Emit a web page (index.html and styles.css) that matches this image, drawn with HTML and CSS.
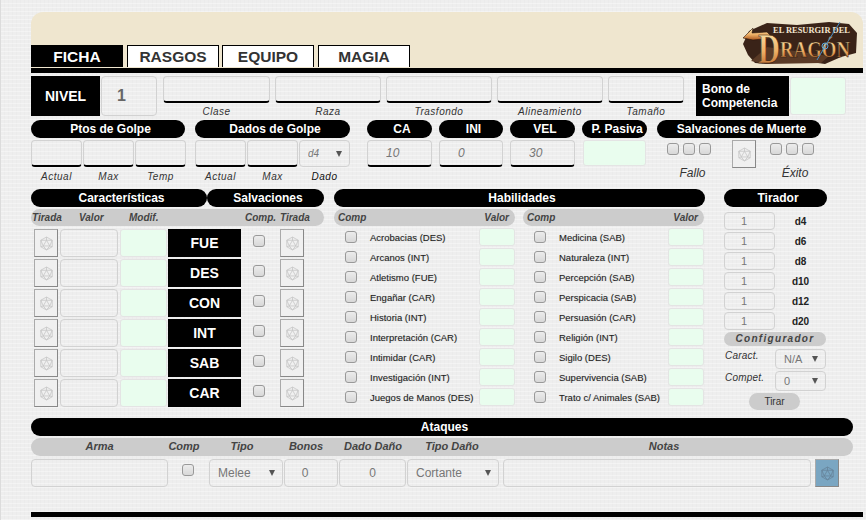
FILE: index.html
```html
<!DOCTYPE html>
<html lang="es">
<head>
    <meta charset="UTF-8">
    <title>Ficha de personaje</title>
    <link rel="stylesheet" href="styles.css">
</head>
<body>
    <svg class="sprite" width="0" height="0">
        <symbol id="d20" viewBox="0 0 16 18">
            <g fill="none" stroke-width="1">
                <path d="M8 1 L15 5 V13 L8 17 L1 13 V5 Z"/>
                <path d="M8 5 L12 12 H4 Z M8 1 V5 M1 5 L8 5 L15 5 M1 13 L4 12 M15 13 L12 12 M8 17 L4 12 M8 17 L12 12 M1 5 L4 12 M15 5 L12 12"/>
            </g>
        </symbol>
    </svg>
    <div class="sheet">
        <div class="banner">
            <div class="tabs">
                <div class="tab tab-active">FICHA</div>
                <div class="tab">RASGOS</div>
                <div class="tab">EQUIPO</div>
                <div class="tab">MAGIA</div>
            </div>
            <svg class="logo" width="123" height="56" viewBox="0 0 123 56">
                <defs>
                    <linearGradient id="gold" x1="0" y1="0" x2="0" y2="1">
                        <stop offset="0" stop-color="#fdeeb8"/>
                        <stop offset="0.55" stop-color="#eeb066"/>
                        <stop offset="1" stop-color="#a9561f"/>
                    </linearGradient>
                </defs>
                <path d="M6 25 L12 12 L30 4 L60 6 L92 3 L112 5 L120 14 L119 34 L104 38 L88 45 L60 41 L30 45 L18 44 L11 36 Z" fill="#3a2318"/>
                <path d="M14 42 L30 28 L92 37 L84 44 L30 45 Z" fill="#5a3a26"/>
                <path d="M6 19 L16 9 L15 14 L30 13 L36 19 L16 21 Z" fill="url(#gold)" stroke="#2a160c" stroke-width="0.6"/>
                <text class="logo-top" x="36" y="14" textLength="77" lengthAdjust="spacingAndGlyphs">EL RESURGIR DEL</text>
                <text class="logo-main" x="21" y="44" font-size="42" textLength="22" lengthAdjust="spacingAndGlyphs">D</text>
                <text class="logo-main" x="43" y="38" font-size="23" textLength="70" lengthAdjust="spacingAndGlyphs">RAGÓN</text>
                <path d="M103 3 L90 24 L80 41" fill="none" stroke="#4a90c8" stroke-width="1"/>
                <circle cx="88" cy="27" r="3" fill="none" stroke="#5aa5dc" stroke-width="1"/>
            </svg>
        </div>
        <div class="bar"></div>

        <div class="row-info">
            <div class="level-label">NIVEL</div>
            <input class="level-value" value="1">
            <div class="info-field info-clase"><input class="field"><span class="caption">Clase</span></div>
            <div class="info-field info-raza"><input class="field"><span class="caption">Raza</span></div>
            <div class="info-field info-raza"><input class="field"><span class="caption">Trasfondo</span></div>
            <div class="info-field info-raza"><input class="field"><span class="caption">Alineamiento</span></div>
            <div class="info-field info-tamano"><input class="field"><span class="caption">Tamaño</span></div>
            <div class="bonus-label">Bono de Competencia</div>
            <input class="calc bonus-value">
        </div>

        <div class="row-stats">
            <div class="group group-hp">
                <div class="pill">Ptos de Golpe</div>
                <div class="trio">
                    <input class="field"><input class="field"><input class="field">
                </div>
                <div class="trio-captions"><span class="caption">Actual</span><span class="caption">Max</span><span class="caption">Temp</span></div>
            </div>
            <div class="group group-dice">
                <div class="pill">Dados de Golpe</div>
                <div class="trio">
                    <input class="field"><input class="field">
                    <div class="select select-italic"><select><option>d4</option></select></div>
                </div>
                <div class="trio-captions"><span class="caption">Actual</span><span class="caption">Max</span><span class="caption caption-dark">Dado</span></div>
            </div>
            <div class="group group-ca">
                <div class="pill">CA</div>
                <input class="field field-stat" value="10">
            </div>
            <div class="group group-small">
                <div class="pill">INI</div>
                <input class="field field-stat" value="0">
            </div>
            <div class="group group-ca">
                <div class="pill">VEL</div>
                <input class="field field-stat" value="30">
            </div>
            <div class="group group-ca">
                <div class="pill">P. Pasiva</div>
                <input class="calc calc-passive">
            </div>
            <div class="group group-death">
                <div class="pill">Salvaciones de Muerte</div>
                <div class="death">
                    <div class="death-side death-fail">
                        <div class="death-checks"><input type="checkbox" class="check"><input type="checkbox" class="check"><input type="checkbox" class="check"></div>
                        <span class="death-label">Fallo</span>
                    </div>
                    <button class="die"><svg><use href="#d20"/></svg></button>
                    <div class="death-side death-ok">
                        <div class="death-checks"><input type="checkbox" class="check"><input type="checkbox" class="check"><input type="checkbox" class="check"></div>
                        <span class="death-label">Éxito</span>
                    </div>
                </div>
            </div>
        </div>

        <div class="row-main">
            <section class="abilities">
                <div class="pills-two">
                    <div class="pill pill-char">Características</div>
                    <div class="pill pill-save">Salvaciones</div>
                </div>
                <div class="subhead subhead-abilities">
                    <span>Tirada</span><span>Valor</span><span>Modif.</span><span>Comp.</span><span>Tirada</span>
                </div>
                <div class="ability">
                    <button class="die"><svg><use href="#d20"/></svg></button>
                    <input class="plain ability-value"><input class="calc ability-mod">
                    <div class="ability-name">FUE</div>
                    <input type="checkbox" class="check ability-check">
                    <button class="die"><svg><use href="#d20"/></svg></button>
                </div>
                <div class="ability">
                    <button class="die"><svg><use href="#d20"/></svg></button>
                    <input class="plain ability-value"><input class="calc ability-mod">
                    <div class="ability-name">DES</div>
                    <input type="checkbox" class="check ability-check">
                    <button class="die"><svg><use href="#d20"/></svg></button>
                </div>
                <div class="ability">
                    <button class="die"><svg><use href="#d20"/></svg></button>
                    <input class="plain ability-value"><input class="calc ability-mod">
                    <div class="ability-name">CON</div>
                    <input type="checkbox" class="check ability-check">
                    <button class="die"><svg><use href="#d20"/></svg></button>
                </div>
                <div class="ability">
                    <button class="die"><svg><use href="#d20"/></svg></button>
                    <input class="plain ability-value"><input class="calc ability-mod">
                    <div class="ability-name">INT</div>
                    <input type="checkbox" class="check ability-check">
                    <button class="die"><svg><use href="#d20"/></svg></button>
                </div>
                <div class="ability">
                    <button class="die"><svg><use href="#d20"/></svg></button>
                    <input class="plain ability-value"><input class="calc ability-mod">
                    <div class="ability-name">SAB</div>
                    <input type="checkbox" class="check ability-check">
                    <button class="die"><svg><use href="#d20"/></svg></button>
                </div>
                <div class="ability">
                    <button class="die"><svg><use href="#d20"/></svg></button>
                    <input class="plain ability-value"><input class="calc ability-mod">
                    <div class="ability-name">CAR</div>
                    <input type="checkbox" class="check ability-check">
                    <button class="die"><svg><use href="#d20"/></svg></button>
                </div>
            </section>

            <section class="skills">
                <div class="pill">Habilidades</div>
                <div class="skills-cols">
                    <div class="skills-col">
                        <div class="subhead subhead-skills"><span>Comp</span><span>Valor</span></div>
                        <div class="skill"><input type="checkbox" class="check"><span>Acrobacias (DES)</span><input class="calc"></div>
                        <div class="skill"><input type="checkbox" class="check"><span>Arcanos (INT)</span><input class="calc"></div>
                        <div class="skill"><input type="checkbox" class="check"><span>Atletismo (FUE)</span><input class="calc"></div>
                        <div class="skill"><input type="checkbox" class="check"><span>Engañar (CAR)</span><input class="calc"></div>
                        <div class="skill"><input type="checkbox" class="check"><span>Historia (INT)</span><input class="calc"></div>
                        <div class="skill"><input type="checkbox" class="check"><span>Interpretación (CAR)</span><input class="calc"></div>
                        <div class="skill"><input type="checkbox" class="check"><span>Intimidar (CAR)</span><input class="calc"></div>
                        <div class="skill"><input type="checkbox" class="check"><span>Investigación (INT)</span><input class="calc"></div>
                        <div class="skill"><input type="checkbox" class="check"><span>Juegos de Manos (DES)</span><input class="calc"></div>
                    </div>
                    <div class="skills-col">
                        <div class="subhead subhead-skills"><span>Comp</span><span>Valor</span></div>
                        <div class="skill"><input type="checkbox" class="check"><span>Medicina (SAB)</span><input class="calc"></div>
                        <div class="skill"><input type="checkbox" class="check"><span>Naturaleza (INT)</span><input class="calc"></div>
                        <div class="skill"><input type="checkbox" class="check"><span>Percepción (SAB)</span><input class="calc"></div>
                        <div class="skill"><input type="checkbox" class="check"><span>Perspicacia (SAB)</span><input class="calc"></div>
                        <div class="skill"><input type="checkbox" class="check"><span>Persuasión (CAR)</span><input class="calc"></div>
                        <div class="skill"><input type="checkbox" class="check"><span>Religión (INT)</span><input class="calc"></div>
                        <div class="skill"><input type="checkbox" class="check"><span>Sigilo (DES)</span><input class="calc"></div>
                        <div class="skill"><input type="checkbox" class="check"><span>Supervivencia (SAB)</span><input class="calc"></div>
                        <div class="skill"><input type="checkbox" class="check"><span>Trato c/ Animales (SAB)</span><input class="calc"></div>
                    </div>
                </div>
            </section>

            <section class="roller">
                <div class="pill">Tirador</div>
                <div class="dice-list">
                    <div class="dice-row"><input class="plain" value="1"><span>d4</span></div>
                    <div class="dice-row"><input class="plain" value="1"><span>d6</span></div>
                    <div class="dice-row"><input class="plain" value="1"><span>d8</span></div>
                    <div class="dice-row"><input class="plain" value="1"><span>d10</span></div>
                    <div class="dice-row"><input class="plain" value="1"><span>d12</span></div>
                    <div class="dice-row"><input class="plain" value="1"><span>d20</span></div>
                </div>
                <div class="config-title">Configurador</div>
                <div class="config-rows">
                    <div class="config-row"><span>Caract.</span><div class="select"><select><option>N/A</option></select></div></div>
                    <div class="config-row"><span>Compet.</span><div class="select"><select><option>0</option></select></div></div>
                </div>
                <button class="roll">Tirar</button>
            </section>
        </div>

        <section class="attacks">
            <div class="pill">Ataques</div>
            <div class="subhead subhead-attacks">
                <span>Arma</span><span>Comp</span><span>Tipo</span><span>Bonos</span><span>Dado Daño</span><span>Tipo Daño</span><span>Notas</span>
            </div>
            <div class="attack-row">
                <input class="plain">
                <input type="checkbox" class="check attack-check">
                <div class="select"><select><option>Melee</option></select></div>
                <input class="plain attack-num attack-bonus" value="0">
                <input class="plain attack-num" value="0">
                <div class="select attack-damage"><select><option>Cortante</option></select></div>
                <input class="plain attack-notes">
                <button class="die die-blue"><svg><use href="#d20"/></svg></button>
            </div>
        </section>
        <div class="bar bar-bottom"></div>
    </div>
</body>
</html>
```

FILE: styles.css
```css
:root {
    --tan: #efe6cf;
    --line: #d2d2d2;
    --green: #e9fdee;
    --grey-head: #cccccc;
    --text-soft: #777;
}
* {
    box-sizing: border-box;
}
body {
    margin: 0;
    height: 520px;
    overflow: hidden;
    padding: 12px 0 0 30px;
    border-left: 1px solid #dcdcdc;
    font-family: "Liberation Sans", Arial, sans-serif;
    color: #222;
    background-color: #eeeeee;
    background-image:
        repeating-linear-gradient(0deg, rgba(255,255,255,0.35) 0 1px, transparent 1px 4px),
        repeating-linear-gradient(90deg, rgba(0,0,0,0.012) 0 1px, transparent 1px 4px);
}
.sprite {
    position: absolute;
}
.sheet {
    width: 832px;
}

/* banner + tabs */
.banner {
    display: flex;
    justify-content: space-between;
    align-items: flex-end;
    height: 56px;
    padding: 0 3px 1px 0;
    background: var(--tan);
    border-radius: 12px 12px 0 0;
}
.tabs {
    display: flex;
    gap: 3px;
}
.tab {
    width: 92px;
    height: 22px;
    line-height: 21px;
    text-align: center;
    font-size: 15.5px;
    font-weight: bold;
    color: #333;
    background: #fff;
    border: 1px solid #000;
    border-bottom: 0;
}
.tab:last-child {
    margin-left: 1px;
}
.tab-active {
    color: #fff;
    background: #000;
    margin-right: 1px;
}
.logo {
    flex: none;
    margin-bottom: -8px;
}
.logo-top {
    font-family: "Liberation Serif", serif;
    font-weight: bold;
    font-size: 8px;
    fill: #f3e6d0;
}
.logo-main {
    font-family: "Liberation Serif", serif;
    font-weight: bold;
    fill: url(#gold);
    stroke: #2a160c;
    stroke-width: 0.5px;
}
.bar {
    height: 5px;
    background: #000;
}
.bar-bottom {
    margin-top: 25px;
}

/* shared bits */
input, select, button {
    font-family: inherit;
    margin: 0;
}
input {
    outline: 0;
}
.field {
    display: block;
    width: 100%;
    height: 27px;
    background: transparent;
    border: 1px solid var(--line);
    border-bottom: 2px solid #000;
    border-radius: 4px;
    font-size: 12px;
    color: var(--text-soft);
}
.field-stat {
    font-style: italic;
    text-align: left;
    padding-left: 18px;
}
.plain {
    background: transparent;
    border: 1px solid var(--line);
    border-radius: 4px;
    color: var(--text-soft);
    font-size: 11px;
}
.calc {
    background: var(--green);
    border: 1px solid #e4e4e4;
    border-radius: 3px;
}
.caption {
    display: block;
    text-align: center;
    font-size: 10px;
    font-style: italic;
    letter-spacing: 0.5px;
    color: #333;
    line-height: 12px;
}
.caption-dark {
    color: #111;
}
.pill {
    height: 18px;
    line-height: 18px;
    padding-left: 5px;
    border-radius: 9px;
    background: #000;
    color: #fff;
    text-align: center;
    font-size: 12px;
    font-weight: bold;
}
.subhead {
    height: 17px;
    margin-top: 2px;
    line-height: 17px;
    border-radius: 9px;
    background: var(--grey-head);
    font-size: 10px;
    font-weight: bold;
    font-style: italic;
    color: #444;
}
.check {
    appearance: none;
    display: block;
    width: 12px;
    height: 12px;
    margin: 0;
    background: linear-gradient(#ececec, #d8d8d8);
    border: 1px solid #999;
    border-radius: 3px;
}
.die {
    flex: none;
    display: flex;
    align-items: center;
    justify-content: center;
    width: 24px;
    height: 28px;
    padding: 0;
    background: #f0f0f0;
    border: 1px solid #aaa;
    border-right-color: #888;
    border-bottom-color: #888;
}
.die svg {
    width: 13px;
    height: 15px;
    stroke: #c6c6c6;
}
.die-blue {
    margin-left: 4px;
    background: #7aa6c2;
}
.die-blue svg {
    stroke: #66849a;
}
.select {
    position: relative;
    height: 100%;
}
.select select {
    appearance: none;
    display: block;
    width: 100%;
    height: 100%;
    padding: 0 0 0 8px;
    background: transparent;
    border: 1px solid var(--line);
    border-radius: 4px;
    font-size: 11px;
    color: var(--text-soft);
}
.select::after {
    content: "";
    position: absolute;
    right: 8px;
    top: 50%;
    margin-top: -3px;
    border-style: solid;
    border-width: 6px 3px 0;
    border-color: #555 transparent transparent;
}
.select-italic select {
    font-style: italic;
    font-size: 10px;
}

/* nivel row */
.row-info {
    display: flex;
    height: 40px;
    margin-top: 3px;
}
.level-label {
    width: 69px;
    line-height: 40px;
    text-align: center;
    background: #000;
    color: #fff;
    font-size: 14px;
    font-weight: bold;
}
.level-value {
    width: 56px;
    margin-left: 1px;
    padding-left: 15px;
    background: transparent;
    border: 1px solid var(--line);
    border-radius: 4px;
    font-size: 16px;
    font-weight: bold;
    color: #666;
}
.info-field {
    margin-left: 5px;
}
.info-clase {
    width: 107px;
    margin-left: 6px;
}
.info-raza {
    width: 106px;
}
.info-tamano {
    width: 76px;
}
.info-field .caption {
    margin-top: 3px;
}
.bonus-label {
    width: 93px;
    margin-left: 12px;
    padding: 6px 0 0 6px;
    background: #000;
    color: #fff;
    font-size: 12px;
    font-weight: bold;
    line-height: 14px;
}
.bonus-value {
    width: 56px;
    margin: 1px 0 1px 1px;
}

/* second row */
.row-stats {
    display: flex;
    height: 65px;
    margin-top: 4px;
}
.group .field, .trio, .calc-passive {
    margin-top: 2px;
}
.group-hp {
    width: 154px;
}
.group-dice {
    width: 155px;
    margin-left: 10px;
}
.group-ca {
    width: 65px;
    margin-left: 7px;
}
.group-dice + .group-ca {
    margin-left: 17px;
}
.group-small {
    width: 64px;
    margin-left: 7px;
}
.group-death {
    width: 164px;
    margin-left: 10px;
}
.trio {
    display: grid;
    grid-template-columns: 51px 51px 51px;
    column-gap: 1px;
    height: 27px;
}
.trio .field {
    margin-top: 0;
}
.trio-captions {
    display: grid;
    grid-template-columns: 51px 51px 51px;
    column-gap: 1px;
    margin-top: 4px;
}
.calc-passive {
    display: block;
    width: 63px;
    height: 26px;
    margin-left: 1px;
}
.death {
    display: flex;
    margin-top: 2px;
}
.death-side {
    width: 75px;
    padding-top: 3px;
    text-align: center;
}
.death-checks {
    display: flex;
    justify-content: center;
    gap: 4px;
}
.death-fail .death-checks {
    padding-right: 11px;
}
.death-fail .death-label {
    padding-right: 4px;
}
.death-ok {
    width: 65px;
}
.death-ok .death-checks {
    justify-content: flex-start;
    padding-left: 14px;
}
.death-ok .death-label {
    padding-left: 13px;
    white-space: nowrap;
}
.death-label {
    display: block;
    margin-top: 11px;
    font-size: 12px;
    font-style: italic;
    color: #333;
}

/* main block */
.row-main {
    display: flex;
    margin-top: 4px;
    height: 221px;
}
.abilities {
    width: 293px;
}
.pills-two {
    display: flex;
}
.pill-char {
    width: 176px;
}
.pill-save {
    width: 117px;
}
.subhead-abilities {
    display: grid;
    grid-template-columns: 47px 50px 116px 35px 1fr;
    padding-left: 1px;
}
.ability {
    display: flex;
    align-items: center;
    height: 28px;
    margin: 0 0 2px 3px;
}
.subhead + .ability {
    margin-top: 3px;
}
.ability-value {
    width: 58px;
    height: 28px;
    margin-left: 2px;
}
.ability-mod {
    width: 47px;
    height: 28px;
    margin-left: 2px;
}
.ability-name {
    width: 73px;
    height: 28px;
    margin-left: 1px;
    line-height: 28px;
    text-align: center;
    background: #000;
    color: #fff;
    font-size: 14px;
    font-weight: bold;
}
.ability-check {
    margin: 0 15px 4px 12px;
}

.skills {
    width: 371px;
    margin-left: 10px;
}
.skills-cols {
    display: grid;
    grid-template-columns: 181px 181px;
    column-gap: 8px;
}
.subhead-skills {
    display: flex;
    justify-content: space-between;
    padding: 0 6px 0 4px;
    margin-bottom: 1px;
}
.skill {
    display: flex;
    align-items: center;
    height: 20px;
    padding-left: 11px;
}
.skill span {
    margin-left: 13px;
    font-size: 9.5px;
    white-space: nowrap;
    color: #222;
    text-shadow: 0 0 1px rgba(0,0,0,0.25);
}
.skill .calc {
    width: 36px;
    height: 18px;
    margin-left: auto;
}

.roller {
    width: 103px;
    margin-left: 19px;
}
.dice-list {
    margin-top: 4px;
}
.dice-row {
    display: flex;
    align-items: center;
    height: 20px;
}
.dice-row .plain {
    width: 51px;
    height: 18px;
    padding-left: 16px;
}
.dice-row span {
    flex: 1;
    padding-right: 1px;
    text-align: center;
    font-size: 10px;
    font-weight: bold;
}
.config-title {
    width: 102px;
    height: 14px;
    margin-top: 1px;
    line-height: 14px;
    border-radius: 7px;
    text-align: center;
    background: var(--grey-head);
    font-size: 10px;
    font-weight: bold;
    font-style: italic;
    letter-spacing: 1.3px;
    color: #444;
}
.config-rows {
    display: grid;
    row-gap: 2px;
    width: 102px;
    margin-top: 3px;
}
.config-row {
    display: flex;
    justify-content: space-between;
    height: 20px;
}
.config-row span {
    margin-left: 1px;
    font-size: 10px;
    font-style: italic;
    letter-spacing: 0.2px;
    color: #333;
    line-height: 14px;
}
.config-row .select {
    width: 51px;
}
.roll {
    display: block;
    width: 51px;
    height: 17px;
    margin: 2px 0 0 25px;
    padding: 0;
    border: 0;
    border-radius: 9px;
    background: var(--grey-head);
    font-size: 10px;
    color: #333;
}

/* ataques */
.attacks {
    width: 822px;
    margin-top: 8px;
}
.subhead-attacks {
    display: grid;
    grid-template-columns: 137px 32px 84px 44px 90px 68px 356px;
    height: 18px;
    font-size: 11px;
    text-align: center;
}
.attack-row {
    display: grid;
    grid-template-columns: 137px 41px 74px 55px 68px 93px 312px 27px;
    height: 28px;
    margin-top: 3px;
}
.attack-check {
    margin: 5px 0 0 14px;
}
.attack-row .select select {
    font-size: 12px;
}
.attack-damage {
    margin-left: 1px;
}
.attack-num {
    margin-left: 1px;
    text-align: center;
    font-size: 12px;
}
.attack-bonus {
    padding-right: 14px;
}
.attack-notes {
    margin-left: 4px;
    width: 308px;
}
```
